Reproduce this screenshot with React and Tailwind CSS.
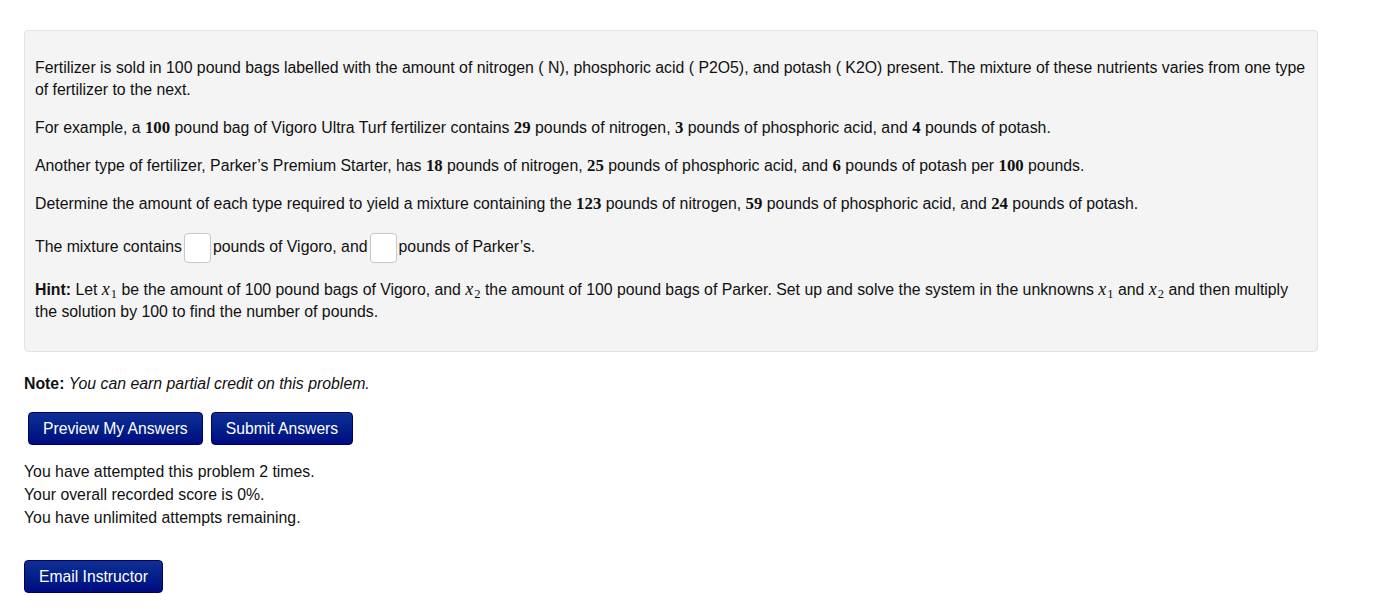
import React from 'react';

const M = ({ children }) => (
  <span className="font-['Liberation_Serif',serif] font-bold text-[16.8px]">{children}</span>
);

const X = ({ n }) => (
  <span className="font-['Liberation_Serif',serif] italic text-[18px] leading-none">
    x<span className="not-italic text-[12.5px] align-[-3px] ml-[1px]">{n}</span>
  </span>
);

const Blank = () => (
  <input
    type="text"
    className="inline-block align-middle w-[27px] h-[30px] mx-[2px] bg-white border border-[#c8c8c8] rounded-[4px] outline-none"
  />
);

const NavyButton = ({ children, className = '' }) => (
  <button
    className={`h-[33px] px-[14px] text-[15.7px] text-white rounded-[4px] border border-[#00005e] bg-gradient-to-b from-[#0f2f94] to-[#000a80] ${className}`}
  >
    {children}
  </button>
);

export default function App() {
  return (
    <div className="font-['Liberation_Sans',Arial,sans-serif] text-[15.84px] text-[#111] pl-[24px] pt-[30px] pb-[20px]">
      <div className="w-[1294px] bg-[#f4f4f4] border border-[#e3e3e3] rounded-[4px] pl-[10px] pr-[2px] pt-[26px] pb-[28px] leading-[22px]">
        <p className="mb-[16px]">
          Fertilizer is sold in 100 pound bags labelled with the amount of nitrogen ( N), phosphoric acid ( P2O5), and potash ( K2O) present. The mixture of these nutrients varies from one type of fertilizer to the next.
        </p>
        <p className="mb-[16px]">
          For example, a <M>100</M> pound bag of Vigoro Ultra Turf fertilizer contains <M>29</M> pounds of nitrogen, <M>3</M> pounds of phosphoric acid, and <M>4</M> pounds of potash.
        </p>
        <p className="mb-[16px]">
          Another type of fertilizer, Parker’s Premium Starter, has <M>18</M> pounds of nitrogen, <M>25</M> pounds of phosphoric acid, and <M>6</M> pounds of potash per <M>100</M> pounds.
        </p>
        <p className="mb-[18px]">
          Determine the amount of each type required to yield a mixture containing the <M>123</M> pounds of nitrogen, <M>59</M> pounds of phosphoric acid, and <M>24</M> pounds of potash.
        </p>
        <p className="mb-[16px] leading-[27px]">
          The mixture contains<Blank />pounds of Vigoro, and<Blank />pounds of Parker’s.
        </p>
        <p className="pr-[8px]">
          <b>Hint:</b> Let <X n="1" /> be the amount of 100 pound bags of Vigoro, and <X n="2" /> the amount of 100 pound bags of Parker. Set up and solve the system in the unknowns <X n="1" /> and <X n="2" /> and then multiply the solution by 100 to find the number of pounds.
        </p>
      </div>

      <p className="mt-[22px] leading-[20px]">
        <b>Note:</b> <i>You can earn partial credit on this problem.</i>
      </p>

      <div className="flex gap-[8px] mt-[18px] pl-[4px]">
        <NavyButton>Preview My Answers</NavyButton>
        <NavyButton>Submit Answers</NavyButton>
      </div>

      <div className="mt-[15px] leading-[23px]">
        <div>You have attempted this problem 2 times.</div>
        <div>Your overall recorded score is 0%.</div>
        <div>You have unlimited attempts remaining.</div>
      </div>

      <div className="mt-[31px]">
        <NavyButton className="h-[32px]">Email Instructor</NavyButton>
      </div>
    </div>
  );
}
